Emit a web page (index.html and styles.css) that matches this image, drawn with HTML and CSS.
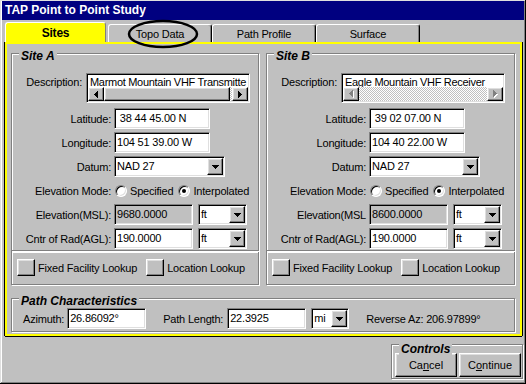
FILE: index.html
```html
<!DOCTYPE html>
<html lang="en">
<head>
    <meta charset="UTF-8">
    <title>TAP Point to Point Study</title>
    <link rel="stylesheet" href="styles.css">
</head>
<body>
    <div class="window">
        <div class="titlebar">TAP Point to Point Study</div>

        <div class="tabs">
            <div class="tab tab-active">Sites</div>
            <div class="tab">Topo Data</div>
            <div class="tab">Path Profile</div>
            <div class="tab">Surface</div>
        </div>

        <div class="panel">
            <div class="sites">
                <!-- Site A -->
                <div class="site">
                    <div class="group etched site-group">
                        <span class="legend">Site A</span>
                        <div class="desc-row">
                            <span class="desc-label">Description:</span>
                            <div class="desc sunken">
                                <div class="desc-text">Marmot Mountain VHF Transmitte</div>
                                <div class="hscroll">
                                    <span class="sb-btn raised"><svg width="4" height="7"><path d="M3 0h1v7h-1v-1h-1v-1h-1v-1h-1v-1h1v-1h1v-1h1z"/></svg></span>
                                    <span class="sb-thumb raised"></span>
                                    <span class="sb-track"></span>
                                    <span class="sb-btn raised"><svg width="4" height="7"><path d="M0 0h1v1h1v1h1v1h1v1h-1v1h-1v1h-1v1h-1z"/></svg></span>
                                </div>
                            </div>
                        </div>
                        <div class="row"><span class="label">Latitude:</span><span class="field sunken w-coord"> 38 44 45.00 N</span></div>
                        <div class="row"><span class="label">Longitude:</span><span class="field sunken w-coord">104 51 39.00 W</span></div>
                        <div class="row">
                            <span class="label">Datum:</span>
                            <div class="combo sunken w-datum">
                                <span class="combo-text">NAD 27</span>
                                <span class="combo-btn raised"><svg width="7" height="4"><path d="M0 0h7v1h-1v1h-1v1h-1v1h-1v-1h-1v-1h-1v-1h-1z"/></svg></span>
                            </div>
                        </div>
                        <div class="row">
                            <span class="label">Elevation Mode:</span>
                            <span class="radio first"></span><span class="opt">Specified</span>
                            <span class="radio on"></span><span>Interpolated</span>
                        </div>
                        <div class="row">
                            <span class="label">Elevation(MSL):</span>
                            <span class="field sunken w-num field-off">9680.0000</span>
                            <div class="combo sunken w-unit">
                                <span class="combo-text">ft</span>
                                <span class="combo-btn raised"><svg width="7" height="4"><path d="M0 0h7v1h-1v1h-1v1h-1v1h-1v-1h-1v-1h-1v-1h-1z"/></svg></span>
                            </div>
                        </div>
                        <div class="row">
                            <span class="label">Cntr of Rad(AGL):</span>
                            <span class="field sunken w-num">190.0000</span>
                            <div class="combo sunken w-unit">
                                <span class="combo-text">ft</span>
                                <span class="combo-btn raised"><svg width="7" height="4"><path d="M0 0h7v1h-1v1h-1v1h-1v1h-1v-1h-1v-1h-1v-1h-1z"/></svg></span>
                            </div>
                        </div>
                    </div>
                    <div class="lookups etched">
                        <span class="lookup-btn raised"></span><span>Fixed Facility Lookup</span>
                        <span class="lookup-btn raised second"></span><span>Location Lookup</span>
                    </div>
                </div>

                <!-- Site B -->
                <div class="site">
                    <div class="group etched site-group">
                        <span class="legend">Site B</span>
                        <div class="desc-row">
                            <span class="desc-label">Description:</span>
                            <div class="desc sunken">
                                <div class="desc-text">Eagle Mountain VHF Receiver</div>
                                <div class="hscroll hscroll-off">
                                    <span class="sb-btn raised"><svg width="5" height="8"><path fill="#fff" transform="translate(1 1)" d="M3 0h1v7h-1v-1h-1v-1h-1v-1h-1v-1h1v-1h1v-1h1z"/><path fill="#808080" d="M3 0h1v7h-1v-1h-1v-1h-1v-1h-1v-1h1v-1h1v-1h1z"/></svg></span>
                                    <span class="sb-track"></span>
                                    <span class="sb-btn raised"><svg width="5" height="8"><path fill="#fff" transform="translate(1 1)" d="M0 0h1v1h1v1h1v1h1v1h-1v1h-1v1h-1v1h-1z"/><path fill="#808080" d="M0 0h1v1h1v1h1v1h1v1h-1v1h-1v1h-1v1h-1z"/></svg></span>
                                </div>
                            </div>
                        </div>
                        <div class="row"><span class="label">Latitude:</span><span class="field sunken w-coord"> 39 02 07.00 N</span></div>
                        <div class="row"><span class="label">Longitude:</span><span class="field sunken w-coord">104 40 22.00 W</span></div>
                        <div class="row">
                            <span class="label">Datum:</span>
                            <div class="combo sunken w-datum">
                                <span class="combo-text">NAD 27</span>
                                <span class="combo-btn raised"><svg width="7" height="4"><path d="M0 0h7v1h-1v1h-1v1h-1v1h-1v-1h-1v-1h-1v-1h-1z"/></svg></span>
                            </div>
                        </div>
                        <div class="row">
                            <span class="label">Elevation Mode:</span>
                            <span class="radio first"></span><span class="opt">Specified</span>
                            <span class="radio on"></span><span>Interpolated</span>
                        </div>
                        <div class="row">
                            <span class="label">Elevation(MSL</span>
                            <span class="field sunken w-num field-off">8600.0000</span>
                            <div class="combo sunken w-unit">
                                <span class="combo-text">ft</span>
                                <span class="combo-btn raised"><svg width="7" height="4"><path d="M0 0h7v1h-1v1h-1v1h-1v1h-1v-1h-1v-1h-1v-1h-1z"/></svg></span>
                            </div>
                        </div>
                        <div class="row">
                            <span class="label">Cntr of Rad(AGL):</span>
                            <span class="field sunken w-num">190.0000</span>
                            <div class="combo sunken w-unit">
                                <span class="combo-text">ft</span>
                                <span class="combo-btn raised"><svg width="7" height="4"><path d="M0 0h7v1h-1v1h-1v1h-1v1h-1v-1h-1v-1h-1v-1h-1z"/></svg></span>
                            </div>
                        </div>
                    </div>
                    <div class="lookups etched">
                        <span class="lookup-btn raised"></span><span>Fixed Facility Lookup</span>
                        <span class="lookup-btn raised second"></span><span>Location Lookup</span>
                    </div>
                </div>
            </div>

            <div class="group etched path-group">
                <span class="legend">Path Characteristics</span>
                <span class="az-label">Azimuth:</span>
                <span class="field sunken w-num">26.86092°</span>
                <span class="len-label">Path Length:</span>
                <span class="field sunken w-num">22.3925</span>
                <div class="combo sunken w-mi">
                    <span class="combo-text">mi</span>
                    <span class="combo-btn raised"><svg width="7" height="4"><path d="M0 0h7v1h-1v1h-1v1h-1v1h-1v-1h-1v-1h-1v-1h-1z"/></svg></span>
                </div>
                <span class="reverse">Reverse Az: 206.97899°</span>
            </div>
        </div>

        <div class="footer">
            <div class="group etched controls">
                <span class="legend">Controls</span>
                <button class="btn raised">Ca<u>n</u>cel</button>
                <button class="btn raised">C<u>o</u>ntinue</button>
            </div>
        </div>

        <svg class="annotation" width="72" height="30"><ellipse cx="36" cy="15" rx="34" ry="13" fill="none" stroke="#000" stroke-width="2.5"/></svg>
    </div>
</body>
</html>
```

FILE: styles.css
```css
body {
    margin: 0;
    background: #c0c0c0;
    font-family: "Liberation Sans", Arial, sans-serif;
    font-size: 11px;
    letter-spacing: -0.2px;
    color: #000;
}

/* bevels */
.sunken {
    border: 1px solid;
    border-color: #808080 #fff #fff #808080;
    box-shadow: inset 1px 1px #000, inset -1px -1px #dfdfdf;
}
.raised {
    border: 1px solid;
    border-color: #fff #000 #000 #fff;
    box-shadow: inset -1px -1px #808080, inset 1px 1px #dfdfdf;
    background: #c0c0c0;
}
.etched {
    border: 1px solid #808080;
    box-shadow: inset 1px 1px #fff, 1px 1px #fff;
}

.window {
    position: relative;
    width: 526px;
    height: 384px;
    box-sizing: border-box;
    padding: 1px 2px 2px 2px;
    display: flex;
    flex-direction: column;
    background: #c0c0c0;
    box-shadow: inset -1px -1px #000, inset 1px 1px #dfdfdf, inset -2px -2px #808080, inset 2px 2px #fff;
}
.titlebar {
    height: 19px;
    line-height: 19px;
    padding-left: 3px;
    background: #000080;
    color: #fff;
    font-weight: bold;
    font-size: 12px;
    letter-spacing: 0;
}

/* tabs */
.tabs {
    display: flex;
    height: 22px;
    padding-left: 3px;
}
.tab {
    box-sizing: border-box;
    width: 104px;
    height: 18px;
    margin-top: 4px;
    display: flex;
    align-items: center;
    justify-content: center;
    border: 1px solid;
    border-bottom: none;
    border-color: #fff #000 #fff #fff;
    border-radius: 3px 3px 0 0;
    box-shadow: inset -1px 0 #808080;
}
.tab-active {
    width: 101px;
    height: 20px;
    margin-top: 2px;
    margin-right: 2px;
    background: #ff0;
    font-weight: bold;
    font-size: 12px;
    border-right-color: #808080;
    box-shadow: none;
}

.panel {
    margin: 0 2px 0 3px;
    padding: 9px 5px 2px 4px;
    border: 2px solid #ff0;
    box-shadow: 1px 0 #000, -1px 0 #000, 0 1px #000;
}
.sites {
    display: grid;
    grid-template-columns: 248px 249px;
    gap: 7px;
}
.site {
    display: flex;
    flex-direction: column;
}

/* group boxes */
.group {
    position: relative;
}
.legend {
    position: absolute;
    top: -4px;
    left: 7px;
    padding: 0 2px;
    background: #c0c0c0;
    font-weight: bold;
    font-style: italic;
    font-size: 12px;
    line-height: 12px;
    letter-spacing: 0;
    white-space: nowrap;
}
.site-group {
    display: flex;
    flex-direction: column;
    gap: 3px;
    padding: 19px 0 1px 0;
}

.desc-row {
    display: flex;
    margin-bottom: 2px;
}
.desc-label {
    width: 70px;
    margin-right: 4px;
    padding-top: 2px;
    line-height: 14px;
    text-align: right;
}
.desc {
    box-sizing: border-box;
    width: 164px;
    height: 30px;
    padding: 1px;
    background: #fff;
    display: flex;
    flex-direction: column;
}
.desc-text {
    height: 12px;
    line-height: 14px;
    padding-left: 2px;
    letter-spacing: -0.3px;
    overflow: hidden;
    white-space: nowrap;
}
.hscroll {
    display: flex;
    height: 14px;
    background: #c0c0c0;
}
.sb-btn {
    box-sizing: border-box;
    width: 16px;
    height: 14px;
    display: flex;
    align-items: center;
    justify-content: center;
}
.sb-thumb {
    flex: 1;
    box-sizing: border-box;
}
.sb-track {
    width: 2px;
    background: repeating-conic-gradient(#fff 0 25%, #c0c0c0 0 50%) 0 0 / 2px 2px;
}
.hscroll-off .sb-track {
    flex: 1;
}

/* form rows */
.row {
    display: flex;
    align-items: center;
    height: 21px;
}
.label {
    width: 99px;
    margin-right: 3px;
    text-align: right;
    white-space: nowrap;
}
.field {
    box-sizing: border-box;
    height: 21px;
    line-height: 19px;
    padding-left: 2px;
    background: #fff;
    white-space: pre;
    overflow: hidden;
}
.field-off {
    background: #c0c0c0;
}
.w-coord { width: 96px; }
.w-num { width: 79px; }
.combo {
    box-sizing: border-box;
    height: 21px;
    padding: 1px;
    background: #fff;
    display: flex;
}
.combo-text {
    flex: 1;
    line-height: 17px;
    padding-left: 1px;
}
.combo-btn {
    box-sizing: border-box;
    width: 16px;
    display: flex;
    align-items: center;
    justify-content: center;
}
.w-datum { width: 111px; }
.w-unit { width: 49px; margin-left: 5px; }
.w-mi { width: 38px; margin-left: 5px; }

.radio {
    box-sizing: border-box;
    width: 12px;
    height: 12px;
    margin-right: 3px;
    border-radius: 50%;
    background: #fff;
    border: 1px solid;
    border-color: #808080 #fff #fff #808080;
    box-shadow: inset 1px 1px #000, inset -1px -1px #dfdfdf;
    display: flex;
    align-items: center;
    justify-content: center;
}
.radio.first { margin-left: 1px; }
.radio.on::after {
    content: "";
    width: 4px;
    height: 4px;
    border-radius: 50%;
    background: #000;
}
.opt { margin-right: 5px; }

.lookups {
    display: flex;
    align-items: center;
    padding: 7px 0 8px 5px;
}
.lookup-btn {
    box-sizing: border-box;
    width: 18px;
    height: 17px;
    margin-right: 3px;
}
.lookup-btn.second { margin-left: 9px; }

/* path characteristics */
.path-group {
    margin-top: 13px;
    display: flex;
    align-items: center;
    padding: 9px 0 2px 11px;
}
.az-label { margin-right: 3px; }
.len-label { margin: 0 4px 0 17px; }
.reverse { margin-left: 17px; }

/* controls */
.footer {
    flex: 1;
    display: flex;
    justify-content: flex-end;
    align-items: flex-start;
}
.controls {
    margin: 8px 1px 0 0;
    padding: 8px 1px 1px 3px;
    display: flex;
    gap: 2px;
}
.controls .legend { top: -2px; }
.btn {
    box-sizing: border-box;
    width: 62px;
    height: 24px;
    padding: 0;
    font: inherit;
    color: #000;
}

.annotation {
    position: absolute;
    left: 127px;
    top: 19px;
}
```
